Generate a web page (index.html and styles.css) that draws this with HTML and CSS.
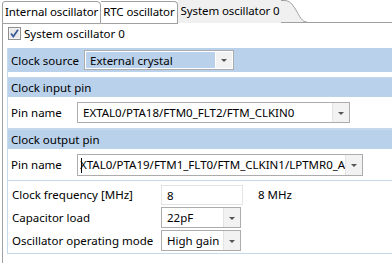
FILE: index.html
```html
<!DOCTYPE html>
<html lang="en">
<head>
    <meta charset="UTF-8">
    <title>System oscillator 0</title>
    <link rel="stylesheet" href="styles.css">
</head>
<body>
    <div class="tabs">
        <div class="tab first">Internal oscillator</div>
        <div class="tab">RTC oscillator</div>
        <div class="tab active">
            <span>System oscillator 0</span>
            <svg class="curve" width="26" height="23" viewBox="0 0 26 23">
                <path d="M0 0.5 H3 C9 0.5 11 4 15 10 C19 17 21 22 26 22 V23 H0 Z" fill="#f0f0f0"/>
                <path d="M0 0.5 H3 C9 0.5 11 4 15 10 C19 17 21 22 26 22" fill="none" stroke="#a0a0a0"/>
            </svg>
        </div>
        <div class="tab-rest"></div>
    </div>

    <div class="frame">
        <div class="check-row">
            <svg class="checkbox" width="13" height="13" viewBox="0 0 13 13">
                <rect x="0.5" y="0.5" width="12" height="12" fill="#f4f4f4" stroke="#8e8f8f"/>
                <rect x="1.5" y="1.5" width="10" height="10" fill="#e9e9e9" stroke="#f4f4f4"/>
                <path d="M3 6.5 L5.3 9.5 L10 2.8" fill="none" stroke="#3a5a9a" stroke-width="1.8"/>
            </svg>
            <span>System oscillator 0</span>
        </div>

        <div class="panel">
            <div class="bar">
                <span class="bar-label">Clock source</span>
                <div class="combo flat source">
                    <span class="combo-text">External crystal</span>
                    <span class="arrow"></span>
                </div>
            </div>

            <div class="group">
                <div class="group-head">Clock input pin</div>
                <div class="group-row">
                    <span class="pin-label">Pin name</span>
                    <div class="combo pin-in">
                        <span class="combo-text">EXTAL0/PTA18/FTM0_FLT2/FTM_CLKIN0</span>
                        <span class="arrow"></span>
                    </div>
                </div>
            </div>

            <div class="group">
                <div class="group-head">Clock output pin</div>
                <div class="group-row">
                    <span class="pin-label">Pin name</span>
                    <div class="combo pin-out">
                        <span class="combo-text caret">XTAL0/PTA19/FTM1_FLT0/FTM_CLKIN1/LPTMR0_ALT1</span>
                        <span class="arrow"></span>
                    </div>
                </div>
            </div>

            <div class="settings">
                <div class="setting">
                    <span class="set-label">Clock frequency [MHz]</span>
                    <div class="text-input">8</div>
                    <span class="unit">8 MHz</span>
                </div>
                <div class="setting">
                    <span class="set-label">Capacitor load</span>
                    <div class="combo small">
                        <span class="combo-text">22pF</span>
                        <span class="arrow"></span>
                    </div>
                </div>
                <div class="setting">
                    <span class="set-label">Oscillator operating mode</span>
                    <div class="combo small">
                        <span class="combo-text">High gain</span>
                        <span class="arrow"></span>
                    </div>
                </div>
            </div>
        </div>
    </div>
</body>
</html>
```

FILE: styles.css
```css
body {
    margin: 0;
    background: #ffffff;
    color: #000000;
    font-family: 'Noto Sans', sans-serif;
    font-size: 11.5px;
    width: 392px;
    height: 266px;
    overflow: hidden;
}

/* tab strip */
.tabs {
    display: flex;
    height: 23px;
    padding-left: 2px;
}

.tab {
    height: 21px;
    margin-top: 1px;
    padding: 0 2px 0 2px;
    line-height: 20px;
    border: 1px solid #a0a0a0;
    border-left: none;
    border-radius: 0 4px 0 0;
    background: #ffffff;
    white-space: nowrap;
    letter-spacing: -0.1px;
}

.tab.first {
    border-left: 1px solid #a0a0a0;
    border-radius: 3px 4px 0 0;
}

.tab.active {
    display: flex;
    height: 23px;
    margin-top: 0;
    padding: 0 0 0 3px;
    border: none;
    border-radius: 0;
    background: #f0f0f0;
}

.tab.active span {
    line-height: 22px;
    padding-right: 1px;
}

.curve {
    display: block;
    margin-right: -26px;
    background: #ffffff;
}

.tab-rest {
    flex: 1;
    border-bottom: 1px solid #a0a0a0;
    height: 22px;
}

/* page */
.frame {
    margin-left: 2px;
    border-left: 1px solid #a0a0a0;
    height: 240px;
    padding-left: 4px;
}

.check-row {
    display: flex;
    align-items: center;
    gap: 3px;
    height: 13px;
    padding: 4px 0 0 1px;
    margin-bottom: 8px;
}

.checkbox {
    display: block;
}

.panel {
    border-left: 1px solid #c6d9ec;
    border-bottom: 1px solid #c6d9ec;
}

.bar {
    display: flex;
    align-items: center;
    height: 24px;
    padding-left: 3px;
    background: #b9d1ea;
}

.bar-label {
    width: 73px;
}

/* combo boxes */
.combo {
    display: flex;
    align-items: stretch;
    border: 1px solid #acacac;
    background: #ffffff;
    box-sizing: border-box;
    overflow: hidden;
}

.combo-text {
    flex: 1;
    padding-left: 5px;
    line-height: 19px;
    white-space: nowrap;
    overflow: hidden;
}

.combo.flat {
    background: #b9d1ea;
    box-shadow: inset 0 0 0 1px #ffffff;
}

.arrow {
    width: 16px;
    flex: none;
    border-left: 1px solid #e3e3e3;
    background: #f2f2f2;
    position: relative;
}

.arrow::after {
    content: "";
    position: absolute;
    left: 5px;
    top: 50%;
    margin-top: -1px;
    border-left: 3px solid transparent;
    border-right: 3px solid transparent;
    border-top: 3px solid #555555;
}

.combo.flat .arrow {
    border-left-color: #ffffff;
    margin: 1px 1px 1px 0;
}

.source {
    width: 150px;
    height: 20px;
}

.pin-in {
    width: 273px;
    height: 21px;
}

.pin-out {
    width: 286px;
    height: 22px;
}

.caret {
    padding-left: 2px;
    position: relative;
}

.caret::before {
    content: "";
    position: absolute;
    left: 3px;
    top: 3px;
    width: 1px;
    height: 15px;
    background: #000000;
}

/* groups */
.group {
    margin-top: 5px;
    border: 1px solid #c6d9ec;
    border-left: none;
    border-right: none;
}

.group + .group {
    margin-top: 0;
}

.group-head {
    height: 19px;
    line-height: 19px;
    padding-left: 3px;
    background: #b9d1ea;
}

.group-row {
    display: flex;
    align-items: center;
    height: 31px;
    padding-left: 3px;
}

.pin-label {
    width: 66px;
}

/* bottom settings */
.settings {
    padding: 3px 0 0 4px;
}

.setting {
    display: flex;
    align-items: center;
    height: 21px;
    margin-bottom: 2px;
}

.set-label {
    width: 149px;
    white-space: nowrap;
}

.text-input {
    width: 82px;
    height: 20px;
    line-height: 19px;
    padding-left: 5px;
    border: 1px solid #e3e3e3;
    box-sizing: border-box;
}

.unit {
    margin-left: 15px;
}

.combo.small {
    width: 80px;
    height: 21px;
}
```
